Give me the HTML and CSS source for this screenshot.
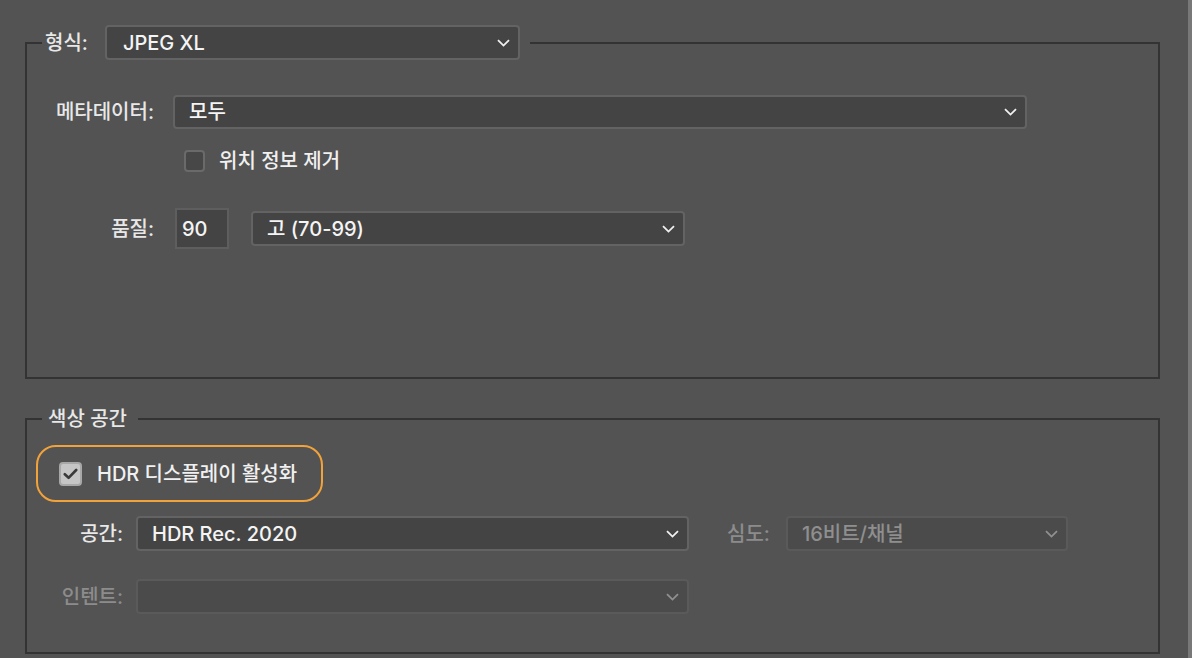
FILE: index.html
```html
<!DOCTYPE html>
<html lang="ko">
<head>
    <meta charset="UTF-8">
    <title>내보내기 설정</title>
    <link rel="stylesheet" href="styles.css">
</head>
<body>
    <div class="panel">
        <fieldset class="group group-format">
            <legend class="legend-format">
                <span class="label">형식:</span>
                <div class="select select-format">
                    <span>JPEG XL</span>
                    <svg class="chevron" width="13" height="8" viewBox="0 0 13 8"><path d="M1 1.2l5.5 5.4 5.5-5.4"/></svg>
                </div>
            </legend>

            <div class="row row-meta">
                <span class="label label-wide">메타데이터:</span>
                <div class="select select-meta">
                    <span>모두</span>
                    <svg class="chevron" width="13" height="8" viewBox="0 0 13 8"><path d="M1 1.2l5.5 5.4 5.5-5.4"/></svg>
                </div>
            </div>

            <div class="check check-geo">
                <span class="box"></span>
                <span>위치 정보 제거</span>
            </div>

            <div class="row row-quality">
                <span class="label label-wide">품질:</span>
                <div class="num">90</div>
                <div class="select select-quality">
                    <span>고 (70-99)</span>
                    <svg class="chevron" width="13" height="8" viewBox="0 0 13 8"><path d="M1 1.2l5.5 5.4 5.5-5.4"/></svg>
                </div>
            </div>
        </fieldset>

        <fieldset class="group group-color">
            <legend class="legend-color">색상 공간</legend>

            <div class="hdr">
                <span class="box checked">
                    <svg width="15" height="12" viewBox="0 0 15 12"><path d="M1.8 6.2l3.8 3.6 7.6-7.8"/></svg>
                </span>
                <span>HDR 디스플레이 활성화</span>
            </div>

            <div class="row row-space">
                <span class="label label-narrow">공간:</span>
                <div class="select select-space">
                    <span>HDR Rec. 2020</span>
                    <svg class="chevron" width="13" height="8" viewBox="0 0 13 8"><path d="M1 1.2l5.5 5.4 5.5-5.4"/></svg>
                </div>
                <span class="label label-depth disabled">심도:</span>
                <div class="select select-depth disabled">
                    <span>16비트/채널</span>
                    <svg class="chevron" width="13" height="8" viewBox="0 0 13 8"><path d="M1 1.2l5.5 5.4 5.5-5.4"/></svg>
                </div>
            </div>

            <div class="row row-intent">
                <span class="label label-narrow disabled">인텐트:</span>
                <div class="select select-space disabled">
                    <span></span>
                    <svg class="chevron" width="13" height="8" viewBox="0 0 13 8"><path d="M1 1.2l5.5 5.4 5.5-5.4"/></svg>
                </div>
            </div>
        </fieldset>
    </div>
    <div class="edge"></div>
</body>
</html>
```

FILE: styles.css
```css
body {
    margin: 0;
    height: 658px;
    overflow: hidden;
    display: flex;
    background-color: #535353;
    color: #f0f0f0;
    font-family: Inter, "Noto Sans CJK KR", sans-serif;
    font-size: 20px;
    font-weight: 500;
    line-height: 24px;
}
.panel {
    flex: 1;
    padding: 25px 28px 0 25px;
}
.edge {
    width: 4px;
    background-color: #787878;
}
.group {
    margin: 0;
    padding: 0;
    min-width: 0;
    border: 2px solid #333333;
}
.group-format {
    padding-bottom: 128px;
}
.group-color {
    margin-top: 28px;
    padding-bottom: 38px;
}
legend {
    margin-left: 15px;
    padding: 0;
}
.legend-format {
    display: flex;
    align-items: center;
    padding: 0 10px 0 3px;
}
.legend-format .label {
    margin-right: 17px;
}
.legend-color {
    padding: 0 11px 0 6px;
    color: #e8e8e8;
}
.label {
    color: #e8e8e8;
    white-space: nowrap;
}
.label-wide {
    width: 127px;
    text-align: right;
}
.label-narrow {
    width: 96px;
    text-align: right;
}
.disabled {
    color: #8c8c8c;
}
.row {
    display: flex;
    align-items: center;
}
.select {
    box-sizing: border-box;
    height: 35px;
    display: flex;
    align-items: center;
    justify-content: space-between;
    padding: 0 8px 0 14px;
    background-color: #444444;
    border: 2px solid #636363;
    border-radius: 4px;
    color: #f4f4f4;
}
.select.disabled {
    background-color: #4b4b4b;
    border-color: #5a5a5a;
    color: #8f8f8f;
}
.chevron {
    fill: none;
    stroke: #f0f0f0;
    stroke-width: 1.8;
}
.select.disabled .chevron {
    stroke: #909090;
}
.select-format {
    width: 415px;
    padding-left: 16px;
}
.row-meta {
    margin-top: 35px;
}
.row-meta .label {
    margin-right: 19px;
}
.select-meta {
    width: 854px;
    height: 34px;
}
.check {
    display: flex;
    align-items: center;
    gap: 14px;
    margin: 20px 0 0 157px;
}
.box {
    box-sizing: border-box;
    width: 21px;
    height: 22px;
    border: 2px solid #6a6a6a;
    border-radius: 4px;
    background-color: #474747;
}
.row-quality {
    margin-top: 35px;
}
.row-quality .label {
    margin-right: 21px;
}
.num {
    box-sizing: border-box;
    width: 54px;
    height: 41px;
    display: flex;
    align-items: center;
    padding-left: 5px;
    margin-right: 22px;
    background-color: #444444;
    border: 2px solid #5e5e5e;
    color: #f4f4f4;
}
.select-quality {
    width: 434px;
}
.hdr {
    box-sizing: border-box;
    width: 287px;
    height: 57px;
    margin: 14px 0 0 9px;
    display: flex;
    align-items: center;
    gap: 15px;
    padding-left: 21px;
    border: 2px solid #f2a23a;
    border-radius: 20px;
}
.box.checked {
    width: 23px;
    height: 24px;
    display: flex;
    align-items: center;
    justify-content: center;
    background-color: #c6c6c6;
    border-color: #a8a8a8;
}
.box.checked svg {
    fill: none;
    stroke: #3a3a3a;
    stroke-width: 2.6;
    stroke-linecap: round;
    stroke-linejoin: round;
}
.row-space {
    margin-top: 14px;
}
.row-space .label-narrow,
.row-intent .label-narrow {
    margin-right: 13px;
}
.select-space {
    width: 553px;
}
.label-depth {
    margin: 0 16px 0 38px;
}
.select-depth {
    width: 282px;
}
.row-intent {
    margin-top: 28px;
}
```
